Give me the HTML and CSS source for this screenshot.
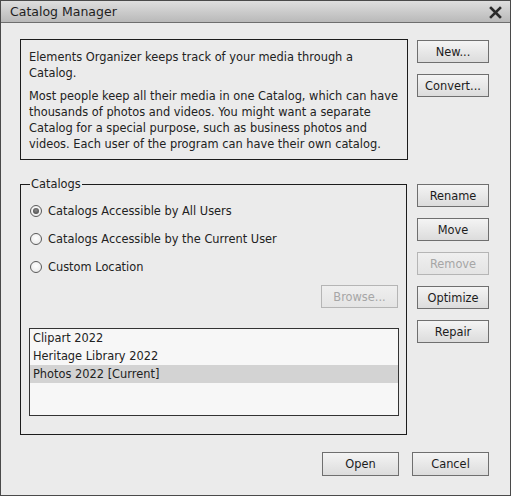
FILE: index.html
```html
<!DOCTYPE html>
<html>
<head>
<meta charset="utf-8">
<link rel="stylesheet" href="styles.css">
</head>
<body>
<div class="window">
  <div class="titlebar">
    <span class="title">Catalog Manager</span>
    <svg class="close" width="13" height="13" viewBox="0 0 13 13"><path d="M2 2 L11 11 M11 2 L2 11" stroke="#2a2a2a" stroke-width="2.6" stroke-linecap="square"/></svg>
  </div>
  <div class="content">
    <div class="row top">
      <div class="info">
        <p>Elements Organizer keeps track of your media through a Catalog.</p>
        <p>Most people keep all their media in one Catalog, which can have thousands of photos and videos. You might want a separate Catalog for a special purpose, such as business photos and videos. Each user of the program can have their own catalog.</p>
      </div>
      <div class="btncol">
        <button class="btn">New...</button>
        <button class="btn">Convert...</button>
      </div>
    </div>
    <div class="row mid">
      <fieldset class="group">
        <legend>Catalogs</legend>
        <label class="radio first"><span class="dot checked"></span>Catalogs Accessible by All Users</label>
        <label class="radio"><span class="dot"></span>Catalogs Accessible by the Current User</label>
        <label class="radio"><span class="dot"></span>Custom Location</label>
        <div class="browse-row"><button class="btn browse" disabled>Browse...</button></div>
        <ul class="list">
          <li>Clipart 2022</li>
          <li>Heritage Library 2022</li>
          <li class="sel">Photos 2022 [Current]</li>
        </ul>
      </fieldset>
      <div class="btncol">
        <button class="btn">Rename</button>
        <button class="btn">Move</button>
        <button class="btn" disabled>Remove</button>
        <button class="btn">Optimize</button>
        <button class="btn">Repair</button>
      </div>
    </div>
    <div class="footer">
      <button class="btn wide">Open</button>
      <button class="btn wide">Cancel</button>
    </div>
  </div>
</div>
</body>
</html>
```
FILE: styles.css
```css
html, body {
  margin: 0;
  padding: 0;
  background: #ebebeb;
}
.window {
  width: 511px;
  height: 496px;
  box-sizing: border-box;
  border: 1px solid #4a4a4a;
  background: #ebebeb;
  font-family: "DejaVu Sans", Verdana, sans-serif;
  font-size: 11.4px;
  color: #222;
  display: flex;
  flex-direction: column;
}
.titlebar {
  height: 21px;
  border-bottom: 1px solid #6e6e6e;
  background: linear-gradient(#dedede, #b9b9b9);
  display: flex;
  align-items: center;
  justify-content: space-between;
  padding: 0 8px 0 9px;
}
.title {
  font-size: 12.5px;
  color: #1e1e1e;
}
.close {
  display: block;
  margin-top: 1px;
}
.content {
  padding: 16px 21px 0 19px;
  display: flex;
  flex-direction: column;
}
.row {
  display: flex;
  align-items: flex-start;
}
.info {
  width: 388px;
  height: 121px;
  box-sizing: border-box;
  border: 1px solid #1c1c1c;
  padding: 9px 6px 0 8px;
  line-height: 16px;
}
.info p {
  margin: 0 0 7px 0;
}
.btncol {
  margin-left: 9px;
  display: flex;
  flex-direction: column;
  gap: 11px;
  padding-top: 1px;
}
.btn {
  font-family: "DejaVu Sans", Verdana, sans-serif;
  font-size: 11.4px;
  color: #1c1c1c;
  width: 72px;
  height: 23px;
  box-sizing: border-box;
  border: 1px solid #6f6f6f;
  border-radius: 0;
  background: linear-gradient(#f4f4f4, #dcdcdc);
  padding: 0;
  margin: 0;
  line-height: 20px;
}
.btn:disabled {
  color: #a6a6a6;
  border-color: #b5b5b5;
  background: linear-gradient(#efefef, #e4e4e4);
}
.mid {
  margin-top: 24px;
}
.mid .btncol {
  margin-left: 10px;
  padding-top: 0;
}
.group {
  width: 387px;
  height: 257px;
  box-sizing: border-box;
  border: 1px solid #1c1c1c;
  margin: -6px 0 0 0;
  padding: 0 7px 0 8px;
  display: flex;
  flex-direction: column;
}
.group legend {
  padding: 0 1px;
  margin-left: 1px;
  font-size: 11.4px;
  line-height: 12px;
  color: #222;
}
.radio {
  display: flex;
  align-items: center;
  height: 16px;
  margin-top: 12px;
  line-height: 16px;
}
.radio.first {
  margin-top: 13px;
}
.dot {
  width: 12px;
  height: 12px;
  box-sizing: border-box;
  border-radius: 50%;
  border: 1px solid #5a5a5a;
  background: radial-gradient(circle at 50% 40%, #ffffff, #e6e6e6);
  margin: 0 6px 0 1px;
  display: flex;
  align-items: center;
  justify-content: center;
}
.dot.checked::after {
  content: "";
  width: 6px;
  height: 6px;
  border-radius: 50%;
  background: radial-gradient(circle at 50% 40%, #8a8a8a, #3c3c3c);
}
.browse-row {
  display: flex;
  justify-content: flex-end;
  margin-top: 10px;
  padding-right: 1px;
}
.browse {
  width: 77px;
}
.list {
  list-style: none;
  margin: 20px 0 0 0;
  padding: 0;
  height: 88px;
  box-sizing: border-box;
  border: 1px solid #333;
  background: #f7f7f7;
}
.list li {
  height: 18px;
  line-height: 18px;
  padding-left: 3px;
}
.list li.sel {
  background: #d3d3d3;
}
.footer {
  display: flex;
  justify-content: flex-end;
  gap: 13px;
  margin-top: 17px;
}
.btn.wide {
  width: 77px;
  height: 24px;
}
```
